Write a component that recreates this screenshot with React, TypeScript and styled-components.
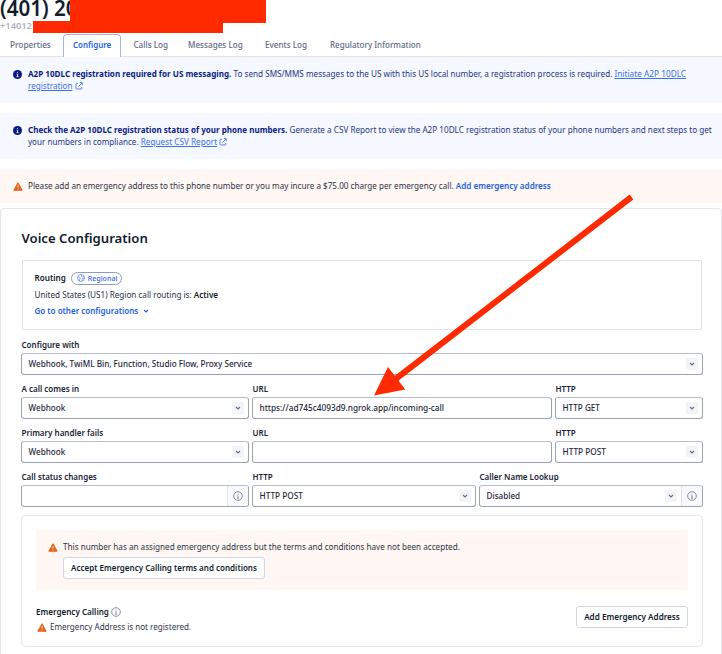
import React from "react";
import styled, { createGlobalStyle } from "styled-components";

const GlobalStyle = createGlobalStyle`
  *, *::before, *::after { box-sizing: border-box; }
  html, body { margin: 0; background: #fff; overflow: hidden; }
  body {
    font-family: "Noto Sans", sans-serif;
    font-size: 8.12px;
    line-height: 12px;
    color: #2a3044;
  }
`;

const Page = styled.div`
  position: relative;
  width: 722px;
  height: 654px;
  overflow: hidden;
  background: #fff;
`;

const Header = styled.header`
  height: 34px;
  white-space: nowrap;
`;

const PhoneTitle = styled.h1`
  margin: 0;
  height: 20px;
  font-size: 20.6px;
  font-weight: 600;
  line-height: 16px;
  color: #121c2d;
`;

const PhoneSub = styled.div`
  font-size: 9.3px;
  font-weight: 600;
  line-height: 12px;
  color: #aeb2c1;
`;

const Redaction = styled.div<{ $x: number; $y: number; $w: number; $h: number }>`
  position: absolute;
  left: ${(p) => p.$x}px;
  top: ${(p) => p.$y}px;
  width: ${(p) => p.$w}px;
  height: ${(p) => p.$h}px;
  background: #ff2a00;
`;

const Tabs = styled.nav`
  display: flex;
  height: 23px;
  border-bottom: 1px solid #e1e3ea;
`;

const Tab = styled.a<{ $width: number; $size?: number; $active?: boolean }>`
  width: ${(p) => p.$width}px;
  height: ${(p) => (p.$active ? 23 : 22)}px;
  padding-left: ${(p) => (p.$active ? 9 : 10)}px;
  font-size: ${(p) => p.$size ?? 8.15}px;
  font-weight: ${(p) => (p.$active ? 600 : 500)};
  line-height: ${(p) => (p.$active ? 20 : 22)}px;
  white-space: nowrap;
  color: ${(p) => (p.$active ? "#1b62e4" : "#606b85")};
  border: ${(p) => (p.$active ? "1px solid #a3b6ea" : "0")};
  border-bottom: 0;
  border-radius: 4px 4px 0 0;
  background: #fff;
`;

const Callout = styled.section<{ $tone: "info" | "warning"; $height: number }>`
  display: flex;
  align-items: flex-start;
  gap: 5px;
  height: ${(p) => p.$height}px;
  margin-bottom: 10px;
  padding: 11px 0 0 13px;
  background: ${(p) => (p.$tone === "info" ? "#f5f9ff" : "#fef7f3")};
  color: ${(p) => (p.$tone === "info" ? "#27357f" : "#2f3445")};
`;

const IconSlot = styled.span`
  display: flex;
  flex: none;
  width: 10px;
  height: 12px;
  align-items: center;
`;

const Line = styled.div<{ $size?: number }>`
  font-size: ${(p) => p.$size ?? 8.13}px;
  line-height: 12px;
  white-space: nowrap;
`;

const Strong = styled.strong<{ $size?: number; $color?: string }>`
  font-size: ${(p) => p.$size ?? 8.11}px;
  font-weight: ${(p) => (p.$color ? 600 : 700)};
  color: ${(p) => p.$color ?? "#0a1a86"};
`;

const TextLink = styled.a<{ $size?: number; $bold?: boolean }>`
  font-size: ${(p) => p.$size ?? 8.28}px;
  font-weight: ${(p) => (p.$bold ? 600 : 400)};
  color: ${(p) => (p.$bold ? "#1b62e4" : "#3a70e6")};
  text-decoration: ${(p) => (p.$bold ? "none" : "underline")};
  text-decoration-thickness: 1px;
  text-underline-offset: 1px;
`;

const InlineSvg = styled.svg`
  flex: none;
  vertical-align: -1px;
`;

const Panel = styled.main`
  height: 460px;
  margin-top: -5px;
  padding: 19px 18px 0 20px;
  border: 1px solid #e3e5ee;
  border-radius: 4px;
`;

const Heading = styled.h2`
  margin: 0 0 12px 0.5px;
  font-size: 13.15px;
  font-weight: 600;
  line-height: 20px;
  color: #121c2d;
`;

const RoutingBox = styled.section`
  display: flex;
  flex-direction: column;
  height: 70px;
  margin: 0 1px;
  padding: 10px 0 0 11.5px;
  border: 1px solid #dfe1e6;
  border-radius: 1px;
`;

const RoutingRow = styled.div`
  display: flex;
  align-items: center;
  gap: 5px;
  height: 14px;
  margin-bottom: 4px;
  font-weight: 600;
  color: #121c2d;
`;

const Badge = styled.span`
  display: inline-flex;
  align-items: center;
  gap: 3px;
  width: 51px;
  height: 13px;
  padding-left: 5px;
  border: 1px solid #8f9cbd;
  border-radius: 7px;
  font-size: 7.1px;
  font-weight: 500;
  line-height: 11px;
  color: #3567e4;
`;

const OtherConfigs = styled.a`
  display: flex;
  align-items: center;
  gap: 5px;
  margin-top: 4px;
  font-size: 8.02px;
  font-weight: 600;
  line-height: 12px;
  color: #1b62e4;
`;

const Form = styled.form`
  display: flex;
  flex-direction: column;
  gap: 8px;
  margin-top: 9px;
`;

const FieldRow = styled.div<{ $columns: string }>`
  display: grid;
  grid-template-columns: ${(p) => p.$columns};
  column-gap: 3.5px;
`;

const FieldLabel = styled.label`
  display: block;
  height: 14px;
  padding-left: 0.5px;
  font-size: 8.03px;
  font-weight: 600;
  line-height: 12px;
  color: #1b2438;
  white-space: nowrap;
`;

const FieldBox = styled.div`
  display: flex;
  align-items: center;
  height: 22px;
  padding-left: 6.5px;
  border: 1px solid #9ca1b5;
  border-top-color: #b9bdcb;
  border-radius: 3px;
  background: #fff;
  overflow: hidden;
`;

const FieldValue = styled.span<{ $size?: number }>`
  flex: 1;
  font-size: ${(p) => p.$size ?? 8.15}px;
  font-weight: 500;
  line-height: 20px;
  white-space: nowrap;
  color: #1f2739;
`;

const ChevronButton = styled.span`
  display: flex;
  align-items: center;
  justify-content: center;
  width: 12px;
  height: 12px;
  margin-right: 4px;
  border-radius: 2px;
  background: #f3f4f7;
`;

const Addon = styled.span`
  display: flex;
  align-items: center;
  justify-content: center;
  width: 21px;
  height: 20px;
  border-left: 1px solid #e1e3ea;
  background: #f9f9fb;
`;

const EmergencyCard = styled.section`
  height: 132px;
  margin-top: 8px;
  padding: 14px 14px 0;
  border: 1px solid #e6e8ee;
  border-radius: 5px;
`;

const EmergencyNotice = styled.div`
  display: flex;
  gap: 5px;
  height: 60px;
  padding: 11px 0 0 12px;
  background: #fef7f3;
  color: #2f3445;
`;

const Button = styled.button<{ $width: number; $size: number }>`
  display: block;
  width: ${(p) => p.$width}px;
  height: 22px;
  padding: 0;
  border: 1px solid #d3d6e2;
  border-radius: 3px;
  background: #fff;
  font-family: inherit;
  font-size: ${(p) => p.$size}px;
  font-weight: 600;
  line-height: 20px;
  color: #121c2d;
  white-space: nowrap;
`;

const NoticeBody = styled.div`
  display: flex;
  flex-direction: column;
  gap: 4px;
`;

const EmergencyFooter = styled.div`
  display: flex;
  justify-content: space-between;
  margin-top: 16px;
`;

const FooterText = styled.div`
  display: flex;
  flex-direction: column;
  gap: 3px;
`;

const FooterLine = styled.div<{ $bold?: boolean }>`
  display: flex;
  align-items: center;
  gap: ${(p) => (p.$bold ? 2.5 : 3)}px;
  height: 12px;
  padding-left: ${(p) => (p.$bold ? 0 : 1)}px;
  font-size: 8.08px;
  font-weight: ${(p) => (p.$bold ? 600 : 400)};
  color: ${(p) => (p.$bold ? "#121c2d" : "#2f3445")};
`;

const ArrowLayer = styled.svg`
  position: absolute;
  left: 0;
  top: 0;
  pointer-events: none;
`;

const InfoSolid = () => (
  <InlineSvg width="9" height="9" viewBox="0 0 18 18">
    <circle cx="9" cy="9" r="9" fill="#06198a" />
    <path d="M9 4.2v1.9M7.4 8.4H9.2v5M7 13.4h4.2" stroke="#fff" strokeWidth="1.7" fill="none" />
  </InlineSvg>
);

const InfoOutline = () => (
  <InlineSvg width="10" height="10" viewBox="0 0 20 20" fill="none" stroke="#69738c">
    <circle cx="10" cy="10" r="8.6" strokeWidth="1.6" />
    <path d="M10 5.2v2M8.6 9.4h1.5v5M8.2 14.4h3.8" strokeWidth="1.5" />
  </InlineSvg>
);

const Warning = () => (
  <InlineSvg width="10" height="9" viewBox="0 0 20 18">
    <path d="M10 1.500 18.400 16.500H1.600Z" fill="#e5641c" stroke="#e5641c" strokeWidth="2" strokeLinejoin="round" />
    <path d="M10 6.200v5.200M10 13v2" stroke="#fff" strokeWidth="1.400" />
  </InlineSvg>
);

const External = () => (
  <InlineSvg width="8" height="8" viewBox="0 0 16 16" fill="none" stroke="#3a70e6" strokeWidth="1.7">
    <path d="M6 2.500H3a1 1 0 0 0-1 1V13a1 1 0 0 0 1 1h9.500a1 1 0 0 0 1-1v-3M9.500 1.500H14.500V6.500M14 2 7 9" />
  </InlineSvg>
);

const Globe = () => (
  <InlineSvg width="8" height="8" viewBox="0 0 16 16" fill="none" stroke="#4a78e8" strokeWidth="1.3">
    <circle cx="8" cy="8" r="7" />
    <path d="M2 5.500 5 6.500 6.500 9 5 11v3M9 1.500 8.500 4.500 11 6.500 14.500 5.500M14.500 9.500 11.500 9 10 11.500 11 14" />
  </InlineSvg>
);

const Chevron = ({ color = "#606b85" }: { color?: string }) => (
  <InlineSvg width="6" height="4" viewBox="0 0 12 8" fill="none" stroke={color} strokeWidth="2.2">
    <path d="M2 2 6 5.800 10 2" />
  </InlineSvg>
);

type FieldProps = { label: string; value?: string; select?: boolean; info?: boolean; size?: number };

const Field = ({ label, value = "", select, info, size }: FieldProps) => (
  <div>
    <FieldLabel>{label}</FieldLabel>
    <FieldBox>
      <FieldValue $size={size}>{value}</FieldValue>
      {select && (
        <ChevronButton>
          <Chevron />
        </ChevronButton>
      )}
      {info && (
        <Addon>
          <InfoOutline />
        </Addon>
      )}
    </FieldBox>
  </div>
);

export default function App() {
  return (
    <>
      <GlobalStyle />
      <Page>
        <Header>
          <PhoneTitle>(401) 20</PhoneTitle>
          <PhoneSub>+14012</PhoneSub>
        </Header>
        <Tabs>
          <Tab $width={63} $size={8.25}>Properties</Tab>
          <Tab $width={58} $size={7.95} $active>Configure</Tab>
          <Tab $width={57}>&#8202;&#8202;&#8202;Calls Log</Tab>
          <Tab $width={77}>Messages Log</Tab>
          <Tab $width={65}>Events Log</Tab>
          <Tab $width={120} $size={8.05}>Regulatory Information</Tab>
        </Tabs>

        <Callout $tone="info" $height={46}>
          <IconSlot><InfoSolid /></IconSlot>
          <div>
            <Line $size={8.17}>
              <Strong>A2P 10DLC registration required for US messaging.</Strong> To send SMS/MMS messages to the US
              with this US local number, a registration process is required.{" "}
              <TextLink>Initiate A2P 10DLC</TextLink>
            </Line>
            <Line><TextLink $size={8.15}>registration</TextLink> <External /></Line>
          </div>
        </Callout>

        <Callout $tone="info" $height={46}>
          <IconSlot><InfoSolid /></IconSlot>
          <div>
            <Line $size={8.16}>
              <Strong $size={8.06}>Check the A2P 10DLC registration status of your phone numbers.</Strong> Generate a
              CSV Report to view the A2P 10DLC registration status of your phone numbers and next steps to get
            </Line>
            <Line $size={8.08}>
              your numbers in compliance. <TextLink $size={8.22}>Request CSV Report</TextLink> <External />
            </Line>
          </div>
        </Callout>

        <Callout $tone="warning" $height={34}>
          <IconSlot><Warning /></IconSlot>
          <Line>
            Please add an emergency address to this phone number or you may incure a $75.00 charge per emergency
            call. <TextLink $bold $size={8.12}>Add emergency address</TextLink>
          </Line>
        </Callout>

        <Panel>
          <Heading>Voice Configuration</Heading>
          <RoutingBox>
            <RoutingRow>
              Routing
              <Badge><Globe />Regional</Badge>
            </RoutingRow>
            <Line>
              United States (US1) Region call routing is: <Strong $color="#121c2d">Active</Strong>
            </Line>
            <OtherConfigs>
              Go to other configurations <Chevron color="#1b62e4" />
            </OtherConfigs>
          </RoutingBox>

          <Form>
            <FieldRow $columns="1fr">
              <Field label="Configure with" value="Webhook, TwiML Bin, Function, Studio Flow, Proxy Service" select />
            </FieldRow>
            <FieldRow $columns="227.5px 299.5px 1fr">
              <Field label="A call comes in" value="Webhook" select />
              <Field label="URL" value="https://ad745c4093d9.ngrok.app/incoming-call" size={8.25} />
              <Field label="HTTP" value="HTTP GET" select />
            </FieldRow>
            <FieldRow $columns="227.5px 299.5px 1fr">
              <Field label="Primary handler fails" value="Webhook" select />
              <Field label="URL" />
              <Field label="HTTP" value="HTTP POST" size={8.25} select />
            </FieldRow>
            <FieldRow $columns="227.5px 223.5px 1fr">
              <Field label="Call status changes" info />
              <Field label="HTTP" value="HTTP POST" size={8.25} select />
              <Field label="Caller Name Lookup" value="Disabled" select info />
            </FieldRow>
          </Form>

          <EmergencyCard>
            <EmergencyNotice>
              <IconSlot><Warning /></IconSlot>
              <NoticeBody>
                <Line>
                  This number has an assigned emergency address but the terms and conditions have not been accepted.
                </Line>
                <Button type="button" $width={202} $size={8.03}>Accept Emergency Calling terms and conditions</Button>
              </NoticeBody>
            </EmergencyNotice>
            <EmergencyFooter>
              <FooterText>
                <FooterLine $bold>Emergency Calling <InfoOutline /></FooterLine>
                <FooterLine><Warning /> Emergency Address is not registered.</FooterLine>
              </FooterText>
              <Button type="button" $width={112} $size={8.13}>Add Emergency Address</Button>
            </EmergencyFooter>
          </EmergencyCard>
        </Panel>

        <Redaction $x={70} $y={0} $w={196} $h={23} />
        <Redaction $x={33} $y={21} $w={190} $h={11.5} />
        <ArrowLayer width="722" height="654" viewBox="0 0 722 654">
          <path d="M631.500 197 395 379.500" stroke="#ff2a00" strokeWidth="6" />
          <path d="M374 395.500 388 367 405.300 389.500Z" fill="#ff2a00" />
        </ArrowLayer>
      </Page>
    </>
  );
}
